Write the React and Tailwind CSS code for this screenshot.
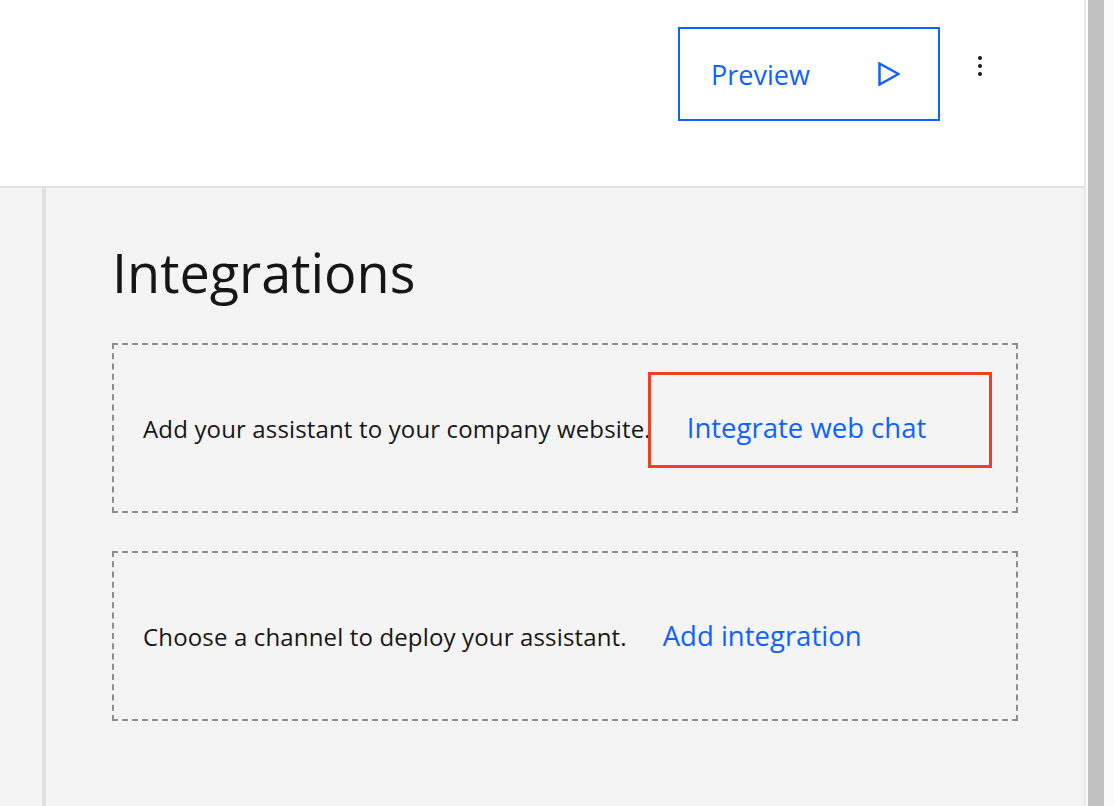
import React from "react";

const font = { fontFamily: "'Open Sans', 'Noto Sans', Arial, sans-serif" };

function PlayIcon() {
  return (
    <svg width="22" height="24" viewBox="0 0 22 24" fill="none" aria-hidden="true">
      <polygon points="1.5,1.5 20.5,12 1.5,22.5" stroke="#0f62fe" strokeWidth="2.5" strokeLinejoin="miter" />
    </svg>
  );
}

function KebabIcon() {
  return (
    <svg width="4" height="20" viewBox="0 0 4 20" aria-hidden="true">
      <circle cx="2" cy="2" r="2" fill="#161616" />
      <circle cx="2" cy="10" r="2" fill="#161616" />
      <circle cx="2" cy="18" r="2" fill="#161616" />
    </svg>
  );
}

function IntegrationCard({ text, link, marked }) {
  return (
    <div className="flex h-[170px] items-center border-2 border-dashed border-[#8d8d8d] pl-[29px]">
      <div className="flex items-baseline gap-[36px]">
        <span className="text-[24px] tracking-[0.15px] text-[#161616]">{text}</span>
        <span className="relative text-[27.5px] text-[#0f62fe]">
          {link}
          {marked ? (
            <span className="pointer-events-none absolute -left-[39px] -right-[66px] -top-[35px] -bottom-[20px] border-[3px] border-[#ee4023]" />
          ) : null}
        </span>
      </div>
    </div>
  );
}

export default function App() {
  return (
    <div className="flex h-screen w-full overflow-hidden bg-white" style={font}>
      <div className="flex min-w-0 flex-1 flex-col">
        {/* top bar */}
        <div className="flex h-[188px] shrink-0 items-start justify-end border-b-2 border-[#e0e0e0] bg-white pr-[102px] pt-[27px]">
          <button className="flex h-[94px] w-[262px] items-center justify-between border-2 border-[#0f62fe] pl-[31px] pr-[38px] text-[27px] text-[#0f62fe]">
            <span className="leading-none">Preview</span>
            <PlayIcon />
          </button>
          <div className="ml-[38px] mt-[29px]">
            <KebabIcon />
          </div>
        </div>

        {/* body */}
        <div className="flex flex-1 bg-[#f4f4f4]">
          <div className="w-[42px] shrink-0" />
          <div className="w-[4px] shrink-0 bg-[#e0e0e0]" />
          <div className="flex-1 px-[66px] pt-[52px]">
            <h1 className="text-[54px] font-normal leading-[1.2] text-[#161616]">Integrations</h1>
            <div className="mt-[38px] flex flex-col gap-[38px]">
              <IntegrationCard text="Add your assistant to your company website." link="Integrate web chat" marked />
              <IntegrationCard text="Choose a channel to deploy your assistant." link="Add integration" />
            </div>
          </div>
        </div>
      </div>

      {/* scrollbar */}
      <div className="flex w-[30px] shrink-0 border-l-2 border-[#e8e8e8] bg-[#fafafa] pl-[2px] pr-[10px]">
        <div className="flex-1 bg-[#c1c1c1]" />
      </div>
    </div>
  );
}
